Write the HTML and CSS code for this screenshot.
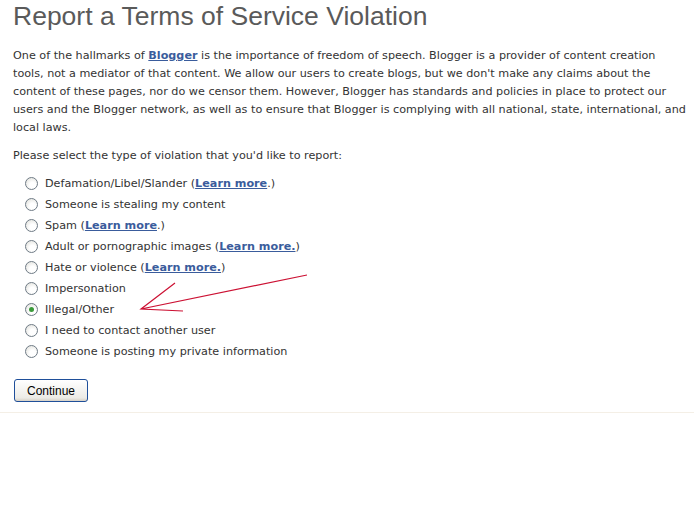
FILE: index.html
```html
<!DOCTYPE html>
<html>
<head>
<meta charset="utf-8">
<link rel="stylesheet" href="styles.css">
</head>
<body>
<div class="page">
  <h1 class="title">Report a Terms of Service Violation</h1>
  <p class="intro">One of the hallmarks of <a class="link" href="#">Blogger</a> is the importance of freedom of speech. Blogger is a provider of content creation tools, not a mediator of that content. We allow our users to create blogs, but we don't make any claims about the content of these pages, nor do we censor them. However, Blogger has standards and policies in place to protect our users and the Blogger network, as well as to ensure that Blogger is complying with all national, state, international, and local laws.</p>
  <p class="prompt">Please select the type of violation that you'd like to report:</p>
  <ul class="options">
    <li class="option"><span class="radio"></span><span>Defamation/Libel/Slander (<a class="link" href="#">Learn more</a>.)</span></li>
    <li class="option"><span class="radio"></span><span>Someone is stealing my content</span></li>
    <li class="option"><span class="radio"></span><span>Spam (<a class="link" href="#">Learn more</a>.)</span></li>
    <li class="option"><span class="radio"></span><span>Adult or pornographic images (<a class="link" href="#">Learn more.</a>)</span></li>
    <li class="option"><span class="radio"></span><span>Hate or violence (<a class="link" href="#">Learn more.</a>)</span></li>
    <li class="option"><span class="radio"></span><span>Impersonation</span></li>
    <li class="option"><span class="radio checked"></span><span>Illegal/Other</span></li>
    <li class="option"><span class="radio"></span><span>I need to contact another user</span></li>
    <li class="option"><span class="radio"></span><span>Someone is posting my private information</span></li>
  </ul>
  <button class="btn" type="button">Continue</button>
  <svg class="arrow" width="694" height="510" viewBox="0 0 694 510">
    <path d="M307 275 L141 309 M175 283 L141 309 L183 311" fill="none" stroke="#cc1133" stroke-width="1.2"/>
  </svg>
</div>
</body>
</html>
```
FILE: styles.css
```css
html, body {
  margin: 0;
  padding: 0;
  background: #fff;
}
.page {
  position: relative;
  width: 694px;
  height: 413px;
  box-sizing: border-box;
  padding: 0 7px 0 13px;
  font-family: "DejaVu Sans", Verdana, sans-serif;
  font-size: 11.2px;
  color: #333;
  border-bottom: 1px solid #f4efe6;
}
.title {
  margin: 0;
  padding-top: 1px;
  font-family: "Liberation Sans", Arial, sans-serif;
  font-weight: normal;
  font-size: 26.5px;
  line-height: 30px;
  color: #5a5a5a;
}
.intro {
  margin: 16px 0 0;
  line-height: 18px;
}
.prompt {
  margin: 10px 0 0;
  line-height: 18px;
}
.link {
  color: #3a5c9c;
  font-weight: bold;
  text-decoration: underline;
}
.options {
  list-style: none;
  margin: 8px 0 0;
  padding: 0 0 0 12px;
}
.option {
  display: flex;
  align-items: center;
  gap: 7px;
  height: 21px;
}
.radio {
  width: 11px;
  height: 11px;
  border: 1px solid #6f7b86;
  border-radius: 50%;
  background: radial-gradient(circle at 60% 65%, #ffffff 30%, #dcdcd6 100%);
  position: relative;
  flex: none;
}
.radio.checked::after {
  content: "";
  position: absolute;
  left: 3px;
  top: 3px;
  width: 5px;
  height: 5px;
  border-radius: 50%;
  background: #3a9a3a;
}
.btn {
  margin-top: 17px;
  margin-left: 1px;
  width: 74px;
  height: 23px;
  border: 1px solid #1f4f9a;
  border-radius: 3px;
  background: linear-gradient(#ffffff, #ecebe6 85%, #d6d0c5);
  font-family: "Liberation Sans", Arial, sans-serif;
  font-size: 12px;
  color: #000;
  padding: 0;
}
.arrow {
  position: absolute;
  left: 0;
  top: 0;
  pointer-events: none;
}
```
